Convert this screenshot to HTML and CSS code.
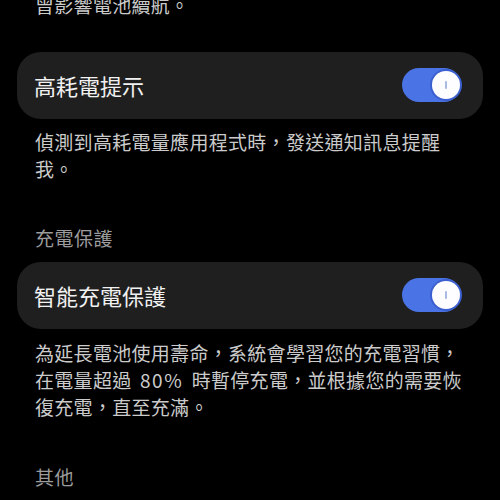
FILE: index.html
```html
<!DOCTYPE html>
<html lang="zh-Hant">
<head>
<meta charset="utf-8">
<link rel="stylesheet" href="styles.css">
</head>
<body>
<main class="page">
  <p class="desc desc-top">曾影響電池續航。</p>

  <div class="card">
    <span class="card-title">高耗電提示</span>
    <span class="toggle"><span class="thumb"></span></span>
  </div>
  <p class="desc desc-1">偵測到高耗電量應用程式時，發送通知訊息提醒我。</p>

  <h2 class="section">充電保護</h2>
  <div class="card">
    <span class="card-title">智能充電保護</span>
    <span class="toggle"><span class="thumb"></span></span>
  </div>
  <p class="desc desc-2">為延長電池使用壽命，系統會學習您的充電習慣，在電量超過 <span class="num">80%</span> 時暫停充電，並根據您的需要恢復充電，直至充滿。</p>

  <h2 class="section section-last">其他</h2>
</main>
</body>
</html>
```

FILE: styles.css
```css
html, body {
  margin: 0;
  padding: 0;
  background: #000;
}

body {
  width: 500px;
  height: 500px;
  overflow: hidden;
  font-family: "Noto Sans CJK TC", "Noto Sans", sans-serif;
}

.page {
  display: flex;
  flex-direction: column;
  padding: 0 17px;
}

.desc {
  margin: 0;
  padding: 0 12px 0 18px;
  font-size: 19px;
  line-height: 27.5px;
  letter-spacing: 0.3px;
  color: #cbcbcb;
}

.desc-top {
  margin-top: -9px;
  margin-bottom: 33px;
}

.desc-1 {
  margin-top: 9px;
}

.desc-2 {
  margin-top: 10px;
  line-height: 27px;
  word-spacing: 4px;
}

.num {
  letter-spacing: 1.5px;
}

.section {
  margin: 41px 0 10px;
  padding-left: 18px;
  font-size: 19px;
  font-weight: 400;
  line-height: 28px;
  letter-spacing: 0.5px;
  color: #9c9c9c;
}

.section-last {
  margin-top: 43px;
}

.card {
  display: flex;
  align-items: center;
  justify-content: space-between;
  height: 67px;
  padding: 0 22px 0 17px;
  box-sizing: border-box;
  background: #1f1f1f;
  border-radius: 24px;
}

.card-title {
  font-size: 22px;
  line-height: 30px;
  color: #f1f1f1;
}

.toggle {
  display: flex;
  align-items: center;
  justify-content: flex-end;
  width: 59px;
  height: 34px;
  padding: 0 1px;
  box-sizing: border-box;
  border-radius: 17px;
  background: #4a74e6;
}

.thumb {
  position: relative;
  width: 28px;
  height: 28px;
  border-radius: 50%;
  background: #fdfdff;
  box-shadow: 0 0 0 2px #3b5fcf;
}

.thumb::after {
  content: "";
  position: absolute;
  left: 13px;
  top: 10px;
  width: 2px;
  height: 8px;
  border-radius: 1px;
  background: #aab9e2;
}
```
